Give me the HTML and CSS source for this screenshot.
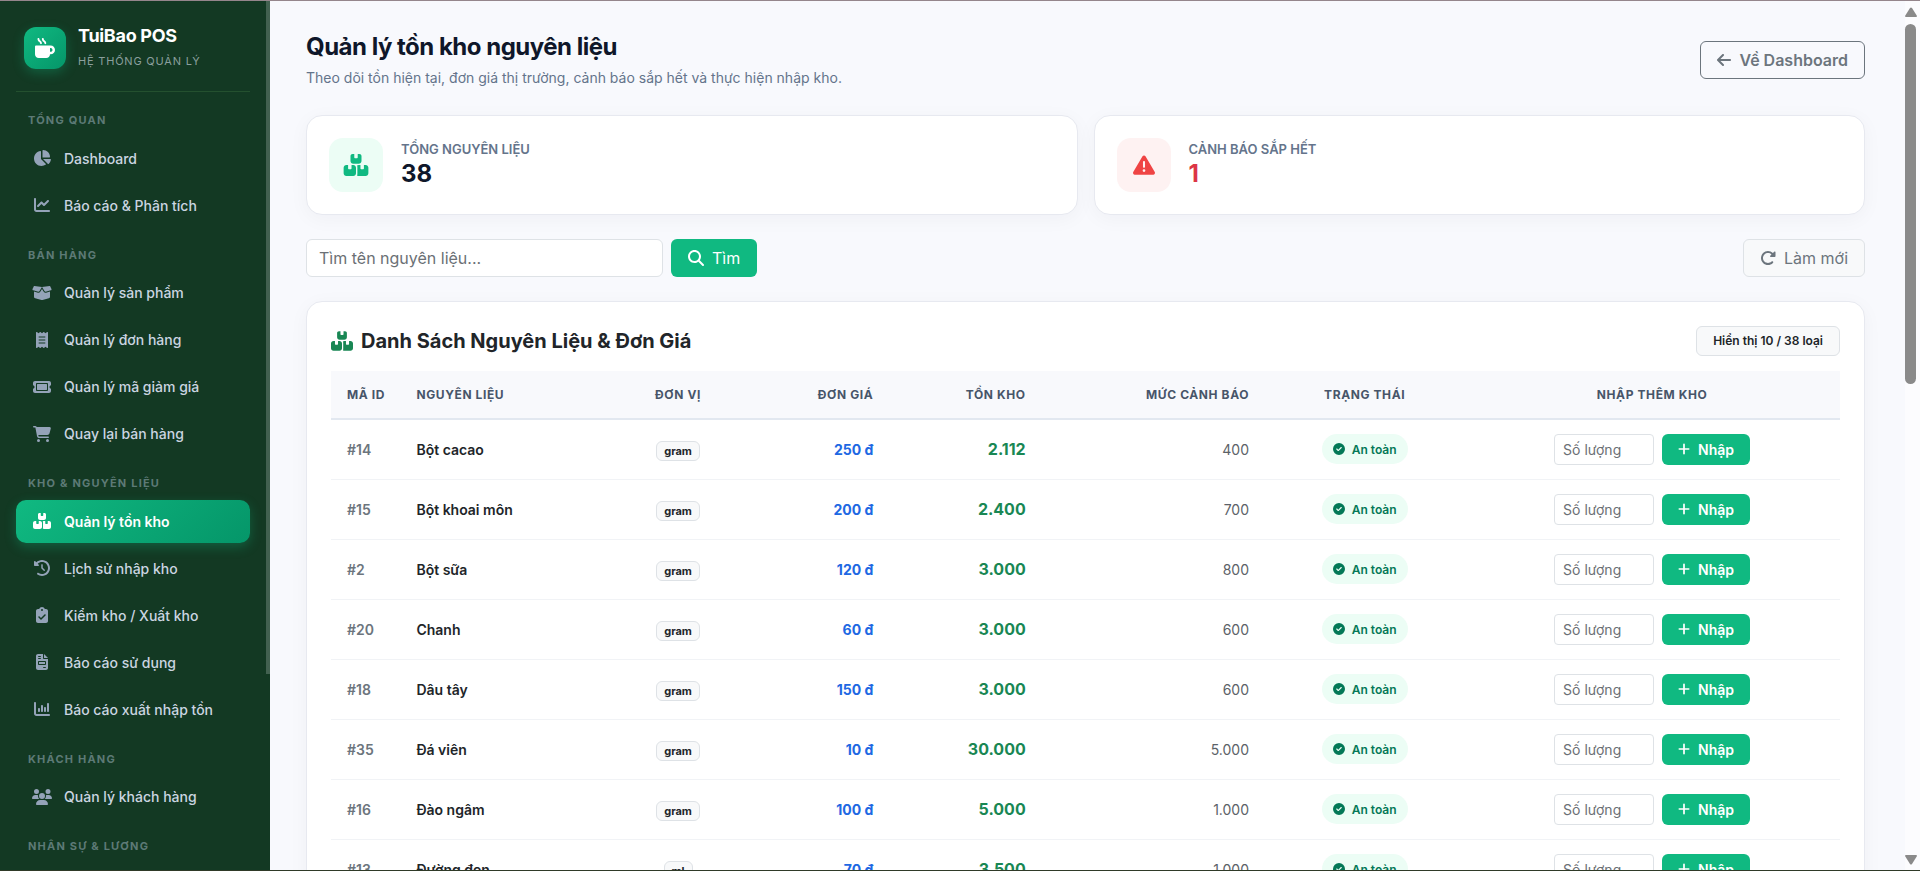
FILE: index.html
```html
<!DOCTYPE html>
<html lang="vi">
<head>
    <meta charset="UTF-8">
    <meta name="viewport" content="width=device-width, initial-scale=1.0">
    <title>Quản lý tồn kho nguyên liệu - TuiBao POS</title>
    <link rel="stylesheet" href="styles.css">
</head>
<body>
    <!-- Icon sprite -->
    <svg class="sprite" aria-hidden="true">
        <symbol id="i-mug" viewBox="0 0 512 512"><path d="M88 0C74.700 0 64 10.700 64 24c0 38.900 23.400 59.400 39.100 73.100l1.100 1C120.500 112.300 128 119.900 128 136c0 13.300 10.700 24 24 24s24-10.700 24-24c0-38.900-23.400-59.400-39.100-73.100l-1.100-1C119.500 47.700 112 40.100 112 24c0-13.300-10.700-24-24-24zM32 192c-17.700 0-32 14.300-32 32L0 416c0 53 43 96 96 96l192 0c53 0 96-43 96-96l16 0c61.900 0 112-50.100 112-112s-50.100-112-112-112l-48 0L32 192zm352 64l16 0c26.500 0 48 21.500 48 48s-21.500 48-48 48l-16 0 0-96zM224 24c0-13.300-10.700-24-24-24s-24 10.700-24 24c0 38.900 23.400 59.400 39.100 73.100l1.100 1C232.500 112.300 240 119.900 240 136c0 13.300 10.700 24 24 24s24-10.700 24-24c0-38.900-23.400-59.400-39.100-73.100l-1.100-1C231.500 47.700 224 40.100 224 24z"/></symbol>
        <symbol id="i-pie" viewBox="0 0 576 512"><path d="M304 240l0-223.400c0-9 7-16.600 16-16.600C443.700 0 544 100.300 544 224c0 9-7.600 16-16.600 16L304 240zM32 272C32 150.700 122.100 50.300 239 34.300c9.200-1.300 17 6.100 17 15.400L256 288 412.500 444.500c6.700 6.700 6.200 17.700-1.500 23.100C371.800 495.600 323.800 512 272 512C139.500 512 32 404.600 32 272zm526.400 16c9.300 0 16.600 7.800 15.400 17c-7.700 55.900-34.600 105.600-73.900 142.300c-6 5.600-15.400 5.200-21.200-.7L320 288l238.400 0z"/></symbol>
        <symbol id="i-line" viewBox="0 0 512 512"><path d="M64 64c0-17.700-14.300-32-32-32S0 46.300 0 64L0 400c0 44.200 35.800 80 80 80l400 0c17.700 0 32-14.300 32-32s-14.300-32-32-32L80 416c-8.800 0-16-7.200-16-16L64 64zm406.600 86.600c12.500-12.500 12.500-32.800 0-45.300s-32.800-12.500-45.300 0L320 210.700l-57.400-57.400c-12.500-12.500-32.800-12.500-45.300 0l-112 112c-12.500 12.500-12.500 32.800 0 45.300s32.800 12.500 45.300 0L240 221.300l57.400 57.400c12.500 12.500 32.800 12.500 45.300 0l128-128z"/></symbol>
        <symbol id="i-box" viewBox="0 0 640 512"><path d="M58.900 42.100c3-6.100 9.600-9.600 16.300-8.700L320 64 564.800 33.400c6.700-.8 13.300 2.700 16.300 8.700l41.700 83.400c9 17.900-.6 39.600-19.800 45.100L439.600 217.300c-13.900 4-28.800-1.900-36.200-14.300L320 64 236.600 203c-7.400 12.400-22.300 18.300-36.200 14.300L37.100 170.600c-19.300-5.500-28.800-27.200-19.800-45.100L58.900 42.100zM321.100 128l54.900 91.400c14.900 24.800 44.600 36.600 72.500 28.600L576 211.600l0 167c0 22-15 41.200-36.400 46.600l-204.100 51c-10.200 2.600-20.900 2.600-31 0l-204.100-51C79 419.700 64 400.500 64 378.500l0-167L191.600 248c27.800 8 57.600-3.800 72.500-28.600L318.900 128l2.200 0z"/></symbol>
        <symbol id="i-receipt" viewBox="0 0 384 512"><path d="M14 2.200C22.500-1.700 32.500-.3 39.600 5.800L80 40.400 120.400 5.800c9-7.700 22.300-7.700 31.200 0L192 40.400 232.400 5.800c9-7.700 22.300-7.700 31.200 0L304 40.400 344.400 5.800c7.100-6.100 17.100-7.500 25.600-3.600s14 12.400 14 21.800l0 464c0 9.400-5.500 17.900-14 21.800s-18.500 2.500-25.600-3.600L304 471.600l-40.400 34.600c-9 7.700-22.300 7.700-31.200 0L192 471.600l-40.400 34.600c-9 7.700-22.300 7.700-31.200 0L80 471.600 39.600 506.200c-7.100 6.100-17.100 7.500-25.600 3.600S0 497.400 0 488L0 24C0 14.600 5.500 6.100 14 2.200zM96 144c-8.800 0-16 7.200-16 16s7.200 16 16 16l192 0c8.800 0 16-7.200 16-16s-7.200-16-16-16L96 144zM80 352c0 8.800 7.200 16 16 16l192 0c8.800 0 16-7.200 16-16s-7.200-16-16-16L96 336c-8.800 0-16 7.200-16 16zM96 240c-8.800 0-16 7.200-16 16s7.200 16 16 16l192 0c8.800 0 16-7.200 16-16s-7.200-16-16-16L96 240z"/></symbol>
        <symbol id="i-ticket" viewBox="0 0 576 512"><path fill-rule="evenodd" d="M64 64C28.700 64 0 92.700 0 128l0 64c0 8.800 7.400 15.700 15.700 18.600C34.500 217.100 48 235 48 256s-13.500 38.900-32.300 45.400C7.400 304.300 0 311.200 0 320l0 64c0 35.300 28.700 64 64 64l448 0c35.300 0 64-28.700 64-64l0-64c0-8.800-7.400-15.700-15.700-18.600C541.500 294.900 528 277 528 256s13.500-38.900 32.300-45.400c8.300-2.900 15.700-9.800 15.700-18.600l0-64c0-35.300-28.700-64-64-64L64 64zm64 112l0 160c0 8.800 7.200 16 16 16l288 0c8.800 0 16-7.200 16-16l0-160c0-8.800-7.200-16-16-16l-288 0c-8.800 0-16 7.200-16 16zM96 160c0-17.700 14.300-32 32-32l320 0c17.700 0 32 14.300 32 32l0 192c0 17.700-14.300 32-32 32l-320 0c-17.700 0-32-14.300-32-32l0-192z"/></symbol>
        <symbol id="i-cart" viewBox="0 0 576 512"><path d="M0 24C0 10.700 10.700 0 24 0L69.500 0c22 0 41.500 12.800 50.600 32l411 0c26.300 0 45.500 25 38.600 50.400l-41 152.300c-8.500 31.400-37 53.300-69.500 53.300l-288.500 0 5.400 28.500c2.200 11.300 12.100 19.500 23.600 19.500L488 336c13.300 0 24 10.700 24 24s-10.700 24-24 24l-288.300 0c-34.600 0-64.300-24.600-70.700-58.500L77.400 54.500c-.7-3.800-4-6.500-7.900-6.500L24 48C10.700 48 0 37.300 0 24zM128 464a48 48 0 1 1 96 0 48 48 0 1 1 -96 0zm336-48a48 48 0 1 1 0 96 48 48 0 1 1 0-96z"/></symbol>
        <symbol id="i-boxes" viewBox="0 0 576 512"><path d="M248 0L208 0c-26.500 0-48 21.500-48 48l0 112c0 35.300 28.700 64 64 64l128 0c35.300 0 64-28.700 64-64l0-112c0-26.500-21.500-48-48-48L328 0l0 80c0 8.800-7.200 16-16 16l-48 0c-8.800 0-16-7.200-16-16l0-80zM64 256c-35.300 0-64 28.700-64 64L0 448c0 35.300 28.700 64 64 64l160 0c35.300 0 64-28.700 64-64l0-128c0-35.300-28.700-64-64-64l-40 0 0 80c0 8.800-7.200 16-16 16l-48 0c-8.800 0-16-7.200-16-16l0-80-40 0zM352 512l160 0c35.300 0 64-28.700 64-64l0-128c0-35.300-28.700-64-64-64l-40 0 0 80c0 8.800-7.200 16-16 16l-48 0c-8.800 0-16-7.200-16-16l0-80-40 0c-15 0-28.800 5.100-39.700 13.800c4.900 10.400 7.700 22 7.700 34.200l0 160c0 12.200-2.800 23.800-7.700 34.200C323.200 506.900 337 512 352 512z"/></symbol>
        <symbol id="i-history" viewBox="0 0 512 512"><path d="M75 75L41 41C25.900 25.900 0 36.600 0 57.900L0 168c0 13.300 10.700 24 24 24l110.100 0c21.400 0 32.100-25.900 17-41l-30.800-30.800C155 85.500 203 64 256 64c106 0 192 86 192 192s-86 192-192 192c-40.800 0-78.600-12.700-109.700-34.400c-14.500-10.100-34.400-6.600-44.600 7.900s-6.600 34.400 7.900 44.600C151.200 495 201.700 512 256 512c141.400 0 256-114.600 256-256S397.400 0 256 0C185.300 0 121.300 28.700 75 75zm181 53c-13.300 0-24 10.700-24 24l0 104c0 6.400 2.500 12.500 7 17l72 72c9.400 9.400 24.600 9.400 33.900 0s9.400-24.600 0-33.900l-65-65 0-94.100c0-13.300-10.700-24-24-24z"/></symbol>
        <symbol id="i-clipboard" viewBox="0 0 384 512"><path d="M192 0c-41.800 0-77.400 26.700-90.500 64L64 64C28.700 64 0 92.700 0 128L0 448c0 35.300 28.700 64 64 64l256 0c35.300 0 64-28.700 64-64l0-320c0-35.300-28.700-64-64-64l-37.500 0C269.400 26.700 233.800 0 192 0zm0 64a32 32 0 1 1 0 64 32 32 0 1 1 0-64zM305 273L177 401c-9.400 9.400-24.600 9.400-33.900 0L79 337c-9.400-9.400-9.400-24.600 0-33.900s24.600-9.400 33.900 0l47 47L271 239c9.400-9.400 24.600-9.400 33.900 0s9.400 24.600 0 33.900z"/></symbol>
        <symbol id="i-invoice" viewBox="0 0 384 512"><path d="M64 0C28.700 0 0 28.700 0 64L0 448c0 35.300 28.700 64 64 64l256 0c35.300 0 64-28.700 64-64l0-288-128 0c-17.700 0-32-14.300-32-32L224 0 64 0zM256 0l0 128 128 0L256 0zM80 64l64 0c8.800 0 16 7.200 16 16s-7.200 16-16 16L80 96c-8.800 0-16-7.200-16-16s7.200-16 16-16zm0 64l64 0c8.800 0 16 7.200 16 16s-7.200 16-16 16l-64 0c-8.800 0-16-7.200-16-16s7.200-16 16-16zm16 96l192 0c17.700 0 32 14.300 32 32l0 64c0 17.700-14.300 32-32 32L96 352c-17.700 0-32-14.300-32-32l0-64c0-17.700 14.300-32 32-32zm0 32l0 64 192 0 0-64L96 256zM240 416l64 0c8.800 0 16 7.200 16 16s-7.200 16-16 16l-64 0c-8.800 0-16-7.200-16-16s7.200-16 16-16z" fill-rule="evenodd"/></symbol>
        <symbol id="i-column" viewBox="0 0 512 512"><path d="M32 32c17.700 0 32 14.300 32 32l0 336c0 8.800 7.200 16 16 16l400 0c17.700 0 32 14.300 32 32s-14.300 32-32 32L80 480c-44.200 0-80-35.800-80-80L0 64C0 46.300 14.300 32 32 32zM160 224c17.700 0 32 14.300 32 32l0 64c0 17.700-14.300 32-32 32s-32-14.300-32-32l0-64c0-17.700 14.300-32 32-32zm128-64l0 160c0 17.700-14.300 32-32 32s-32-14.300-32-32l0-160c0-17.700 14.300-32 32-32s32 14.300 32 32zm64 32c17.700 0 32 14.300 32 32l0 96c0 17.700-14.300 32-32 32s-32-14.300-32-32l0-96c0-17.700 14.300-32 32-32zM480 96l0 224c0 17.700-14.300 32-32 32s-32-14.300-32-32l0-224c0-17.700 14.300-32 32-32s32 14.300 32 32z"/></symbol>
        <symbol id="i-users" viewBox="0 0 640 512"><path d="M144 0a80 80 0 1 1 0 160A80 80 0 1 1 144 0zM512 0a80 80 0 1 1 0 160A80 80 0 1 1 512 0zM0 298.700C0 239.800 47.800 192 106.700 192l42.700 0c15.900 0 31 3.500 44.600 9.700c-1.300 7.200-1.900 14.700-1.900 22.300c0 38.200 16.800 72.500 43.300 96c-.2 0-.4 0-.7 0L21.300 320C9.600 320 0 310.400 0 298.700zM405.300 320c-.2 0-.4 0-.7 0c26.600-23.500 43.300-57.800 43.300-96c0-7.600-.7-15-1.900-22.300c13.600-6.300 28.700-9.700 44.600-9.700l42.700 0C592.200 192 640 239.800 640 298.700c0 11.800-9.600 21.300-21.300 21.300l-213.300 0zM224 224a96 96 0 1 1 192 0 96 96 0 1 1 -192 0zM128 485.300C128 411.700 187.700 352 261.300 352l117.300 0C452.300 352 512 411.700 512 485.300c0 14.700-11.900 26.700-26.700 26.700l-330.700 0c-14.700 0-26.700-11.900-26.700-26.700z"/></symbol>
        <symbol id="i-arrow-left" viewBox="0 0 448 512"><path d="M9.400 233.400c-12.500 12.500-12.500 32.800 0 45.300l160 160c12.500 12.500 32.800 12.500 45.300 0s12.500-32.800 0-45.300L109.200 288 416 288c17.700 0 32-14.300 32-32s-14.300-32-32-32l-306.700 0L214.600 118.600c12.500-12.500 12.500-32.800 0-45.300s-32.800-12.500-45.300 0l-160 160z"/></symbol>
        <symbol id="i-warning" viewBox="0 0 512 512"><path d="M256 32c14.200 0 27.300 7.500 34.500 19.800l216 368c7.300 12.400 7.300 27.700 .2 40.100S486.300 480 472 480L40 480c-14.300 0-27.600-7.700-34.700-20.100s-7-27.800 .2-40.100l216-368C228.700 39.500 241.800 32 256 32zm0 128c-13.300 0-24 10.700-24 24l0 112c0 13.300 10.700 24 24 24s24-10.700 24-24l0-112c0-13.300-10.700-24-24-24zm32 224a32 32 0 1 0 -64 0 32 32 0 1 0 64 0z"/></symbol>
        <symbol id="i-search" viewBox="0 0 512 512"><path d="M416 208c0 45.900-14.900 88.300-40 122.700L502.600 457.400c12.500 12.500 12.500 32.800 0 45.300s-32.800 12.500-45.300 0L330.700 376c-34.400 25.200-76.800 40-122.700 40C93.100 416 0 322.900 0 208S93.100 0 208 0S416 93.100 416 208zM208 352a144 144 0 1 0 0-288 144 144 0 1 0 0 288z"/></symbol>
        <symbol id="i-rotate" viewBox="0 0 512 512"><path d="M463.500 224l8.500 0c13.300 0 24-10.700 24-24l0-128c0-9.700-5.800-18.500-14.800-22.200s-19.300-1.700-26.200 5.200L413.400 96.600c-87.600-86.500-228.700-86.200-315.800 1c-87.500 87.500-87.500 229.300 0 316.800s229.300 87.500 316.800 0c12.500-12.500 12.500-32.800 0-45.300s-32.800-12.500-45.300 0c-62.500 62.500-163.800 62.500-226.300 0s-62.500-163.800 0-226.300c62.200-62.200 162.700-62.500 225.300-1L327 183c-6.900 6.900-8.900 17.200-5.200 26.200s12.500 14.800 22.200 14.800l119.500 0z"/></symbol>
        <symbol id="i-check" viewBox="0 0 512 512"><path d="M256 512A256 256 0 1 0 256 0a256 256 0 1 0 0 512zM369 209L241 337c-9.400 9.400-24.600 9.400-33.900 0l-64-64c-9.400-9.400-9.400-24.600 0-33.900s24.600-9.400 33.900 0l47 47L335 175c9.400-9.400 24.600-9.400 33.900 0s9.400 24.600 0 33.900z"/></symbol>
        <symbol id="i-plus" viewBox="0 0 448 512"><path d="M256 80c0-17.700-14.300-32-32-32s-32 14.300-32 32l0 144L48 224c-17.700 0-32 14.300-32 32s14.300 32 32 32l144 0 0 144c0 17.700 14.300 32 32 32s32-14.300 32-32l0-144 144 0c17.700 0 32-14.300 32-32s-14.300-32-32-32l-144 0 0-144z"/></symbol>
    </svg>

    <aside class="sidebar">
        <div class="brand">
            <div class="brand-logo"><svg><use href="#i-mug"/></svg></div>
            <div class="brand-text">
                <div class="brand-name">TuiBao POS</div>
                <div class="brand-sub">HỆ THỐNG QUẢN LÝ</div>
            </div>
        </div>
        <nav>
            <div class="nav-label">TỔNG QUAN</div>
            <a href="#" class="nav-item"><svg><use href="#i-pie"/></svg>Dashboard</a>
            <a href="#" class="nav-item"><svg><use href="#i-line"/></svg>Báo cáo &amp; Phân tích</a>

            <div class="nav-label">BÁN HÀNG</div>
            <a href="#" class="nav-item"><svg><use href="#i-box"/></svg>Quản lý sản phẩm</a>
            <a href="#" class="nav-item"><svg><use href="#i-receipt"/></svg>Quản lý đơn hàng</a>
            <a href="#" class="nav-item"><svg><use href="#i-ticket"/></svg>Quản lý mã giảm giá</a>
            <a href="#" class="nav-item"><svg><use href="#i-cart"/></svg>Quay lại bán hàng</a>

            <div class="nav-label">KHO &amp; NGUYÊN LIỆU</div>
            <a href="#" class="nav-item active"><svg><use href="#i-boxes"/></svg>Quản lý tồn kho</a>
            <a href="#" class="nav-item"><svg><use href="#i-history"/></svg>Lịch sử nhập kho</a>
            <a href="#" class="nav-item"><svg><use href="#i-clipboard"/></svg>Kiểm kho / Xuất kho</a>
            <a href="#" class="nav-item"><svg><use href="#i-invoice"/></svg>Báo cáo sử dụng</a>
            <a href="#" class="nav-item"><svg><use href="#i-column"/></svg>Báo cáo xuất nhập tồn</a>

            <div class="nav-label">KHÁCH HÀNG</div>
            <a href="#" class="nav-item"><svg><use href="#i-users"/></svg>Quản lý khách hàng</a>

            <div class="nav-label">NHÂN SỰ &amp; LƯƠNG</div>
        </nav>
        <div class="sidebar-thumb"></div>
    </aside>

    <main class="content">
        <header class="page-header">
            <div>
                <h1>Quản lý tồn kho nguyên liệu</h1>
                <p>Theo dõi tồn hiện tại, đơn giá thị trường, cảnh báo sắp hết và thực hiện nhập kho.</p>
            </div>
            <a href="#" class="btn btn-outline"><svg><use href="#i-arrow-left"/></svg>Về Dashboard</a>
        </header>

        <section class="stats">
            <div class="card stat">
                <div class="stat-icon green"><svg><use href="#i-boxes"/></svg></div>
                <div class="stat-text">
                    <div class="stat-label">TỔNG NGUYÊN LIỆU</div>
                    <div class="stat-value">38</div>
                </div>
            </div>
            <div class="card stat">
                <div class="stat-icon red"><svg><use href="#i-warning"/></svg></div>
                <div class="stat-text">
                    <div class="stat-label">CẢNH BÁO SẮP HẾT</div>
                    <div class="stat-value danger">1</div>
                </div>
            </div>
        </section>

        <form class="toolbar">
            <input type="text" class="search" placeholder="Tìm tên nguyên liệu..." aria-label="Tìm tên nguyên liệu">
            <button type="button" class="btn btn-green"><svg><use href="#i-search"/></svg>Tìm</button>
            <button type="button" class="btn btn-light"><svg><use href="#i-rotate"/></svg>Làm mới</button>
        </form>

        <section class="card list">
            <div class="list-header">
                <h2><svg><use href="#i-boxes"/></svg>Danh Sách Nguyên Liệu &amp; Đơn Giá</h2>
                <span class="count">Hiển thị 10 / 38 loại</span>
            </div>
            <table>
                <colgroup>
                    <col class="c-id"><col class="c-name"><col class="c-unit"><col class="c-price">
                    <col class="c-stock"><col class="c-min"><col class="c-status"><col class="c-add">
                </colgroup>
                <thead>
                    <tr>
                        <th>MÃ ID</th>
                        <th>NGUYÊN LIỆU</th>
                        <th class="center">ĐƠN VỊ</th>
                        <th class="right">ĐƠN GIÁ</th>
                        <th class="right">TỒN KHO</th>
                        <th class="right">MỨC CẢNH BÁO</th>
                        <th class="center">TRẠNG THÁI</th>
                        <th class="center">NHẬP THÊM KHO</th>
                    </tr>
                </thead>
                <tbody>
                    <tr>
                        <td class="id">#14</td>
                        <td class="name">Bột cacao</td>
                        <td class="center"><span class="unit">gram</span></td>
                        <td class="right price">250 đ</td>
                        <td class="right stock">2.112</td>
                        <td class="right min">400</td>
                        <td class="center"><span class="status"><svg><use href="#i-check"/></svg>An toàn</span></td>
                        <td><form class="add"><input type="text" placeholder="Số lượng" aria-label="Số lượng"><button type="button"><svg><use href="#i-plus"/></svg>Nhập</button></form></td>
                    </tr>
                    <tr>
                        <td class="id">#15</td>
                        <td class="name">Bột khoai môn</td>
                        <td class="center"><span class="unit">gram</span></td>
                        <td class="right price">200 đ</td>
                        <td class="right stock">2.400</td>
                        <td class="right min">700</td>
                        <td class="center"><span class="status"><svg><use href="#i-check"/></svg>An toàn</span></td>
                        <td><form class="add"><input type="text" placeholder="Số lượng" aria-label="Số lượng"><button type="button"><svg><use href="#i-plus"/></svg>Nhập</button></form></td>
                    </tr>
                    <tr>
                        <td class="id">#2</td>
                        <td class="name">Bột sữa</td>
                        <td class="center"><span class="unit">gram</span></td>
                        <td class="right price">120 đ</td>
                        <td class="right stock">3.000</td>
                        <td class="right min">800</td>
                        <td class="center"><span class="status"><svg><use href="#i-check"/></svg>An toàn</span></td>
                        <td><form class="add"><input type="text" placeholder="Số lượng" aria-label="Số lượng"><button type="button"><svg><use href="#i-plus"/></svg>Nhập</button></form></td>
                    </tr>
                    <tr>
                        <td class="id">#20</td>
                        <td class="name">Chanh</td>
                        <td class="center"><span class="unit">gram</span></td>
                        <td class="right price">60 đ</td>
                        <td class="right stock">3.000</td>
                        <td class="right min">600</td>
                        <td class="center"><span class="status"><svg><use href="#i-check"/></svg>An toàn</span></td>
                        <td><form class="add"><input type="text" placeholder="Số lượng" aria-label="Số lượng"><button type="button"><svg><use href="#i-plus"/></svg>Nhập</button></form></td>
                    </tr>
                    <tr>
                        <td class="id">#18</td>
                        <td class="name">Dâu tây</td>
                        <td class="center"><span class="unit">gram</span></td>
                        <td class="right price">150 đ</td>
                        <td class="right stock">3.000</td>
                        <td class="right min">600</td>
                        <td class="center"><span class="status"><svg><use href="#i-check"/></svg>An toàn</span></td>
                        <td><form class="add"><input type="text" placeholder="Số lượng" aria-label="Số lượng"><button type="button"><svg><use href="#i-plus"/></svg>Nhập</button></form></td>
                    </tr>
                    <tr>
                        <td class="id">#35</td>
                        <td class="name">Đá viên</td>
                        <td class="center"><span class="unit">gram</span></td>
                        <td class="right price">10 đ</td>
                        <td class="right stock">30.000</td>
                        <td class="right min">5.000</td>
                        <td class="center"><span class="status"><svg><use href="#i-check"/></svg>An toàn</span></td>
                        <td><form class="add"><input type="text" placeholder="Số lượng" aria-label="Số lượng"><button type="button"><svg><use href="#i-plus"/></svg>Nhập</button></form></td>
                    </tr>
                    <tr>
                        <td class="id">#16</td>
                        <td class="name">Đào ngâm</td>
                        <td class="center"><span class="unit">gram</span></td>
                        <td class="right price">100 đ</td>
                        <td class="right stock">5.000</td>
                        <td class="right min">1.000</td>
                        <td class="center"><span class="status"><svg><use href="#i-check"/></svg>An toàn</span></td>
                        <td><form class="add"><input type="text" placeholder="Số lượng" aria-label="Số lượng"><button type="button"><svg><use href="#i-plus"/></svg>Nhập</button></form></td>
                    </tr>
                    <tr>
                        <td class="id">#13</td>
                        <td class="name">Đường đen</td>
                        <td class="center"><span class="unit">ml</span></td>
                        <td class="right price">70 đ</td>
                        <td class="right stock">3.500</td>
                        <td class="right min">1.000</td>
                        <td class="center"><span class="status"><svg><use href="#i-check"/></svg>An toàn</span></td>
                        <td><form class="add"><input type="text" placeholder="Số lượng" aria-label="Số lượng"><button type="button"><svg><use href="#i-plus"/></svg>Nhập</button></form></td>
                    </tr>
                </tbody>
            </table>
        </section>
    </main>

    <div class="scrollbar" aria-hidden="true">
        <svg viewBox="0 0 12 10"><path d="M5 1Q6 0 7 1L12 9Q12 10 11 10H1Q0 10 0 9z"/></svg>
        <div class="scroll-thumb"></div>
        <svg viewBox="0 0 12 10"><path d="M5 9Q6 10 7 9L12 1Q12 0 11 0H1Q0 0 0 1z"/></svg>
    </div>
</body>
</html>
```
FILE: styles.css
```css
* {
    margin: 0;
    padding: 0;
    box-sizing: border-box;
}
body {
    display: grid;
    grid-template-columns: 270px 1fr 15px;
    height: 100vh;
    overflow: hidden;
    border-top: 1px solid #95868c;
    border-bottom: 1px solid #2f3a28;
    background: #f8f9fd;
    color: #212529;
    font-family: Inter, "Liberation Sans", sans-serif;
    font-size: 14px;
}
input,
button {
    font-family: inherit;
}
a {
    text-decoration: none;
}
svg {
    width: 16px;
    height: 16px;
    fill: currentColor;
    flex-shrink: 0;
}
.sprite {
    display: none;
}

/* Sidebar */
.sidebar {
    position: relative;
    overflow: hidden;
    padding: 24px 20px 0 16px;
    background: #133923;
}
.sidebar-thumb {
    position: absolute;
    top: 0;
    right: 0;
    width: 4px;
    height: 77.4%;
    background: #426150;
}
.brand {
    display: flex;
    align-items: center;
    gap: 12px;
    height: 67px;
    padding: 0 8px 20px;
    margin-bottom: 4px;
    border-bottom: 1px solid #24502f;
}
.brand-logo {
    display: flex;
    align-items: center;
    justify-content: center;
    width: 42px;
    height: 42px;
    border-radius: 12px;
    background: linear-gradient(135deg, #10b981, #059669);
    box-shadow: 0 4px 12px rgba(16, 185, 129, 0.3);
    color: white;
    & svg {
        width: 20px;
        height: 20px;
    }
}
.brand-text {
    padding-bottom: 2px;
}
.brand-name {
    color: white;
    font-size: 18px;
    font-weight: 700;
    line-height: 24px;
    letter-spacing: -0.3px;
}
.brand-sub {
    margin-top: 4px;
    color: #8a9f9d;
    font-size: 11px;
    line-height: 18px;
    letter-spacing: 0.8px;
}
.nav-label {
    padding: 16px 12px 8px;
    color: #5d7a76;
    font-size: 11px;
    font-weight: 700;
    line-height: 1.5;
    letter-spacing: 1.2px;
}
.nav-item {
    display: flex;
    align-items: center;
    gap: 12px;
    height: 43px;
    padding: 0 16px;
    margin-bottom: 4px;
    border-radius: 10px;
    color: #cbd5e1;
    font-size: 14px;
    font-weight: 500;
    & svg {
        width: 20px;
        color: #94a3b8;
    }
    &.active {
        background: linear-gradient(135deg, #10b981, #059669);
        box-shadow: 0 4px 12px rgba(16, 185, 129, 0.3);
        color: white;
        font-weight: 600;
    }
    &.active svg {
        color: white;
    }
}

/* Content */
.content {
    min-width: 0;
    overflow: hidden;
    padding: 28px 40px 0 36px;
}
.page-header {
    display: flex;
    align-items: center;
    justify-content: space-between;
    height: 62px;
    margin-bottom: 24px;
    & h1 {
        color: #0f172a;
        font-size: 24px;
        font-weight: 700;
        line-height: 32px;
        letter-spacing: -0.5px;
    }
    & p {
        margin-top: 4px;
        color: #64748b;
        font-size: 14px;
        line-height: 22px;
    }
}
.btn {
    display: inline-flex;
    align-items: center;
    gap: 8px;
    height: 38px;
    padding: 0 16px;
    border: 1px solid transparent;
    border-radius: 6px;
    font-size: 16px;
}
.btn-outline {
    border-color: #6c757d;
    color: #6c757d;
    font-weight: 600;
    & svg {
        width: 14px;
    }
}
.btn-green {
    background: #10b981;
    color: white;
}
.btn-light {
    margin-left: auto;
    border-color: #dee2e6;
    background: #f8f9fa;
    color: #6c757d;
}
.card {
    border: 1px solid #e7e9f0;
    border-radius: 16px;
    background: white;
    box-shadow: 0 4px 20px rgba(15, 23, 42, 0.04);
}
.stats {
    display: grid;
    grid-template-columns: 1fr 1fr;
    gap: 16px;
    margin-bottom: 24px;
}
.stat {
    display: flex;
    align-items: center;
    gap: 18px;
    height: 100px;
    padding: 0 22px;
}
.stat-icon {
    display: flex;
    align-items: center;
    justify-content: center;
    width: 54px;
    height: 54px;
    border-radius: 14px;
    & svg {
        width: 26px;
        height: 22px;
    }
    &.green {
        background: #ecfdf5;
        color: #10b981;
    }
    &.red {
        background: #fef2f2;
        color: #ef4444;
    }
}
.stat-text {
    padding-bottom: 3px;
}
.stat-label {
    color: #64748b;
    font-size: 13px;
    font-weight: 600;
    line-height: 20px;
}
.stat-value {
    color: #0f172a;
    font-size: 24px;
    font-weight: 700;
    line-height: 30px;
    &.danger {
        color: #dc3545;
    }
}
.toolbar {
    display: flex;
    gap: 8px;
    margin-bottom: 24px;
}
.search {
    width: 357px;
    height: 38px;
    padding: 0 12px;
    border: 1px solid #dee2e6;
    border-radius: 6px;
    background: white;
    font-size: 16px;
}
input::placeholder {
    color: #6b7075;
}

/* Ingredient list */
.list {
    padding: 24px;
}
.list-header {
    display: flex;
    align-items: center;
    justify-content: space-between;
    margin-bottom: 15px;
    & h2 {
        display: flex;
        align-items: center;
        gap: 8px;
        font-size: 20px;
        font-weight: 700;
    }
    & h2 svg {
        width: 22px;
        height: 20px;
        color: #198754;
    }
}
.count {
    padding: 0 16px;
    border: 1px solid #dee2e6;
    border-radius: 6px;
    background: #f8f9fa;
    font-size: 12px;
    font-weight: 600;
    line-height: 28px;
}
table {
    width: 100%;
    table-layout: fixed;
    border-collapse: collapse;
}
.c-id { width: 4.6%; }
.c-name { width: 13.8%; }
.c-unit { width: 9.2%; }
.c-price { width: 9.4%; }
.c-stock { width: 10.1%; }
.c-min { width: 14.8%; }
.c-status { width: 13.2%; }
.c-add { width: 24.9%; }
th {
    height: 48px;
    padding: 0 16px;
    border-bottom: 2px solid #e2e8f0;
    background: #f8f9fc;
    color: #475569;
    font-size: 12px;
    font-weight: 700;
    letter-spacing: 0.6px;
    text-align: left;
    white-space: nowrap;
}
td {
    height: 60px;
    padding: 0 16px;
    border-bottom: 1px solid #f1f3f6;
    white-space: nowrap;
}
.center {
    text-align: center;
}
.right {
    text-align: right;
}
.id {
    color: #6c757d;
    font-weight: 600;
}
.name {
    font-weight: 600;
}
.unit {
    display: inline-block;
    margin-top: 3px;
    padding: 0 7px;
    border: 1px solid #dee2e6;
    border-radius: 6px;
    background: #f8f9fa;
    font-size: 11px;
    font-weight: 700;
    line-height: 18px;
}
.price {
    color: #2068e3;
    font-weight: 700;
}
.stock {
    color: #198754;
    font-size: 16px;
    font-weight: 700;
}
.min {
    color: #5c6268;
}
.status {
    display: inline-flex;
    align-items: center;
    gap: 7px;
    height: 30px;
    padding: 0 11px;
    border-radius: 15px;
    background: #ecfdf5;
    color: #047857;
    font-size: 12px;
    font-weight: 600;
    & svg {
        width: 12px;
        height: 12px;
    }
}
.add {
    display: flex;
    justify-content: center;
    gap: 8px;
    & input {
        width: 100px;
        height: 31px;
        padding: 0 8px;
        border: 1px solid #dee2e6;
        border-radius: 4px;
        font-size: 14px;
    }
    & button {
        display: flex;
        align-items: center;
        gap: 8px;
        height: 31px;
        padding: 0 16px;
        border: 0;
        border-radius: 6px;
        background: #10b981;
        color: white;
        font-size: 14px;
        font-weight: 600;
    }
    & button svg {
        width: 12px;
        height: 14px;
    }
}

/* Page scrollbar */
.scrollbar {
    display: flex;
    flex-direction: column;
    align-items: flex-start;
    gap: 7px;
    padding: 6px 0 5px;
    background: #fcfcfe;
    color: #8a8a8a;
    & svg {
        width: 12px;
        height: 10px;
    }
    & svg:last-child {
        margin-top: auto;
    }
}
.scroll-thumb {
    width: 11px;
    height: 42%;
    border-radius: 6px;
    background: #8a8a8a;
}
```
